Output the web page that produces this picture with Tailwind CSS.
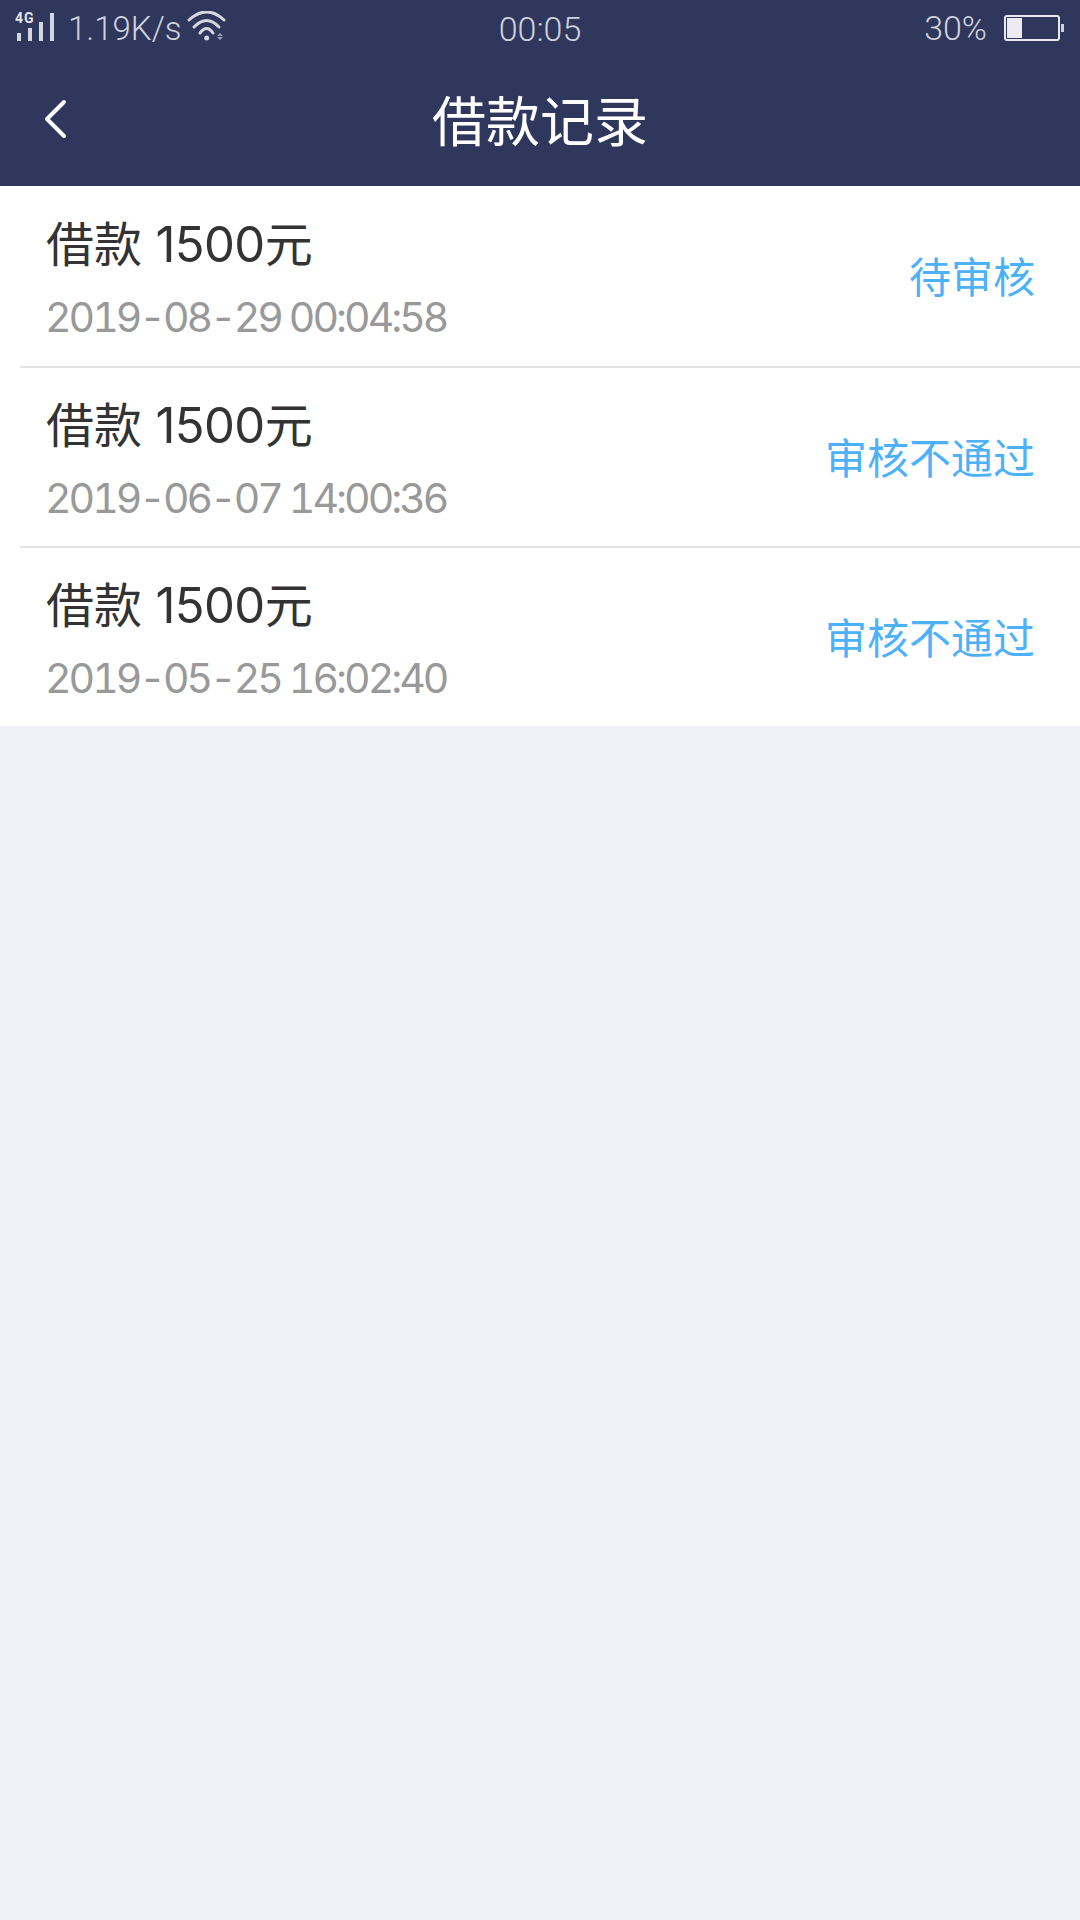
<!DOCTYPE html>
<html lang="zh-CN">
<head>
<meta charset="utf-8">
<script src="https://cdn.jsdelivr.net/npm/@tailwindcss/browser@4"></script>
</head>
<body class="m-0">
<div class="w-[1080px] h-[1920px] bg-[#f0f2f7] flex flex-col font-['Inter','Noto_Sans_CJK_SC',sans-serif]">
  <header class="relative h-[186px] bg-[#2f375d] shrink-0">
    <div class="h-[56px] relative flex items-center justify-between text-[#cfd2dc] font-['Roboto','Noto_Sans_CJK_SC',sans-serif] font-light text-[33px] leading-[40px]">
      <div class="flex items-center pl-[15px]">
        <div class="relative w-[41px] h-[42px]">
          <span class="absolute left-0 top-[4px] text-[14px] leading-[14px] font-bold tracking-[1px] text-[#e4e5ec]">4G</span>
          <svg class="absolute left-0 top-0" width="41" height="42" viewBox="0 0 41 42" fill="#d5d7e0"><rect x="2" y="26" width="4" height="8"/><rect x="13" y="21" width="4" height="13"/><rect x="24" y="15" width="4" height="19"/><rect x="35" y="6" width="4" height="28"/></svg>
        </div>
        <span class="ml-[12px] translate-y-[1px]">1.19K/s</span>
        <svg class="ml-[5px]" width="40" height="34" viewBox="0 0 40 34" fill="none" stroke="#d5d7e0" stroke-width="3" stroke-linecap="round"><path d="M2 9Q19.700 -7 37 9"/><path d="M7 16Q19.700 3 32 16"/><path d="M13 22Q19.700 13 26 22"/><circle cx="19.700" cy="27" r="2.500" fill="#d5d7e0" stroke="none"/><path d="M30 25l3-3 3 3zM30 26l3 3 3-3z" fill="#9a9eb2" stroke="none"/></svg>
      </div>
      <span class="absolute left-0 right-0 text-center text-[34px] translate-y-[1px]">00:05</span>
      <div class="flex items-center pr-[16px]">
        <span class="text-[34px]">30%</span>
        <div class="ml-[17px] w-[56px] h-[26px] border-2 border-[#e8e8ef] rounded-[3px] p-[1px]">
          <div class="w-[15px] h-full bg-[#ebebf1]"></div>
        </div>
        <div class="ml-[1px] w-[3px] h-[8px] bg-[#cfd2dc]"></div>
      </div>
    </div>
    <svg class="absolute left-[43px] top-[98px]" width="26" height="44" viewBox="0 0 26 44" fill="none" stroke="#fff" stroke-width="4" stroke-linecap="round" stroke-linejoin="round"><path d="M21 4L4 21L21 38"/></svg>
    <h1 class="absolute left-0 right-0 top-[89px] text-center text-white text-[54px] leading-[68px] font-normal">借款记录</h1>
  </header>
  <ul class="bg-white">
    <li class="h-[180px] flex items-center justify-between pl-[46px] pr-[45px]">
      <div class="translate-y-[1px]"><div class="text-[#333] text-[48px] leading-[58px]">借款 <span class="text-[49px] tracking-[-0.6px]">1500</span>元</div><div class="mt-[21px] -ml-[1px] text-[#999] text-[41px] leading-[44px] tracking-[-3px] tabular-nums">2019-08-29 00:04:58</div></div>
      <span class="text-[#4db1f9] text-[42px] translate-y-[1px]">待审核</span>
    </li>
    <li class="ml-[20px] h-[2px] bg-[#e3e3e3]"></li>
    <li class="h-[178px] flex items-center justify-between pl-[46px] pr-[45px]">
      <div class="translate-y-[1px]"><div class="text-[#333] text-[48px] leading-[58px]">借款 <span class="text-[49px] tracking-[-0.6px]">1500</span>元</div><div class="mt-[21px] -ml-[1px] text-[#999] text-[41px] leading-[44px] tracking-[-3px] tabular-nums">2019-06-07 14:00:36</div></div>
      <span class="text-[#4db1f9] text-[42px] translate-y-[1px]">审核不通过</span>
    </li>
    <li class="ml-[20px] h-[2px] bg-[#e3e3e3]"></li>
    <li class="h-[178px] flex items-center justify-between pl-[46px] pr-[45px]">
      <div class="translate-y-[1px]"><div class="text-[#333] text-[48px] leading-[58px]">借款 <span class="text-[49px] tracking-[-0.6px]">1500</span>元</div><div class="mt-[21px] -ml-[1px] text-[#999] text-[41px] leading-[44px] tracking-[-3px] tabular-nums">2019-05-25 16:02:40</div></div>
      <span class="text-[#4db1f9] text-[42px] translate-y-[1px]">审核不通过</span>
    </li>
  </ul>
</div>
</body>
</html>
